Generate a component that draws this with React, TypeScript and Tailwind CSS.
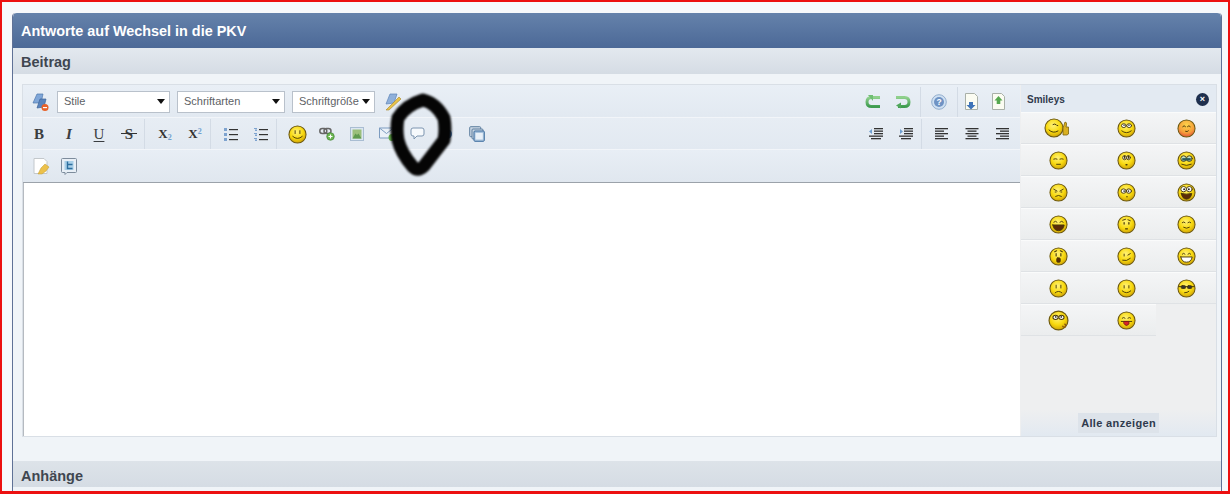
import React, { ReactNode } from 'react';

// Shared gradients for the drawn icons
function Defs() {
  return (
    <svg width="0" height="0" className="absolute">
      <defs>
        <radialGradient id="yellow" cx="45%" cy="35%" r="70%">
          <stop offset="0%" stopColor="#fff27a" />
          <stop offset="55%" stopColor="#f8d90f" />
          <stop offset="100%" stopColor="#c99a06" />
        </radialGradient>
        <radialGradient id="blush" cx="50%" cy="30%" r="75%">
          <stop offset="0%" stopColor="#fbd34a" />
          <stop offset="60%" stopColor="#f6a03a" />
          <stop offset="100%" stopColor="#e0443a" />
        </radialGradient>
        <linearGradient id="green" x1="0" y1="0" x2="0" y2="1">
          <stop offset="0%" stopColor="#8fd08c" />
          <stop offset="100%" stopColor="#3f9c50" />
        </linearGradient>
      </defs>
    </svg>
  );
}

function Face({ children, fill = 'yellow', size = 19 }: { children?: ReactNode; fill?: string; size?: number }) {
  return (
    <svg width={size} height={size} viewBox="0 0 20 20">
      <circle cx="10" cy="10" r="9" fill={`url(#${fill})`} stroke="#6e5a10" strokeWidth="1.1" />
      <g fill="none" stroke="#4a3a08" strokeWidth="1" strokeLinecap="round">{children}</g>
    </svg>
  );
}

const bigEyes = (
  <>
    <ellipse cx="7.2" cy="7" rx="2.5" ry="2" fill="#fff" />
    <ellipse cx="12.8" cy="7" rx="2.5" ry="2" fill="#fff" />
    <circle cx="7.4" cy="6.6" r=".8" fill="#333" stroke="none" />
    <circle cx="12.6" cy="6.6" r=".8" fill="#333" stroke="none" />
  </>
);

const smileys: ReactNode[] = [
  <div key="thumb" className="flex items-center -ml-1">
    <Face size={20}>
      <path d="M9 6.5q1.500-1 3 0M13 7.500l.8.1M5 12q4 4 9 1" />
    </Face>
    <svg width="9" height="15" viewBox="0 0 9 15" className="-ml-1">
      <path d="M3 14V7l2-6q2 0 1.500 3L6 6h2.500v7L7 14z" fill="#d9b020" stroke="#7d6510" strokeWidth=".8" />
    </svg>
  </div>,
  <Face key="roll">
    {bigEyes}
    <path d="M5 12.500q5 4 10 0" />
  </Face>,
  <Face key="blush" fill="blush">
    <path d="M6 8q1.500-2 3 0M11 8q1.500-2 3 0M9 13q2 1 3-.5" />
  </Face>,
  <Face key="sleepy">
    <path d="M5 8.500q2-.8 3.500 0M11.500 8.500q2-.8 3.500 0M8 14h4" />
  </Face>,
  <Face key="up">
    <ellipse cx="8" cy="7" rx="2" ry="2.200" fill="#fff" />
    <ellipse cx="12" cy="7" rx="2" ry="2.200" fill="#fff" />
    <path d="M8 5.500v2M12 5.500v2M9.500 14.500h1" strokeWidth="1.400" />
  </Face>,
  <Face key="glass">
    <ellipse cx="7" cy="8" rx="3" ry="3" fill="#bfe2c8" />
    <ellipse cx="13" cy="8" rx="3" ry="3" fill="#bfe2c8" />
    <rect x="5.500" y="7.500" width="9" height="2.500" fill="#2c5a5a" stroke="none" />
    <path d="M5 14q5 2.500 10 0" />
  </Face>,
  <Face key="angry">
    <path d="M5 6.500l3.500 2M15 6.500l-3.500 2M6.500 9.500h1M12.500 9.500h1M7 14q3-2 6 0" />
  </Face>,
  <Face key="eyes">
    <ellipse cx="7" cy="8.500" rx="2.700" ry="2.300" fill="#fff" />
    <ellipse cx="12.500" cy="8.500" rx="2.700" ry="2.300" fill="#fff" />
    <circle cx="7.500" cy="8.500" r=".9" fill="#333" stroke="none" />
    <circle cx="12" cy="8.500" r=".9" fill="#333" stroke="none" />
    <path d="M10 14.500h1" />
  </Face>,
  <Face key="shock">
    <ellipse cx="7" cy="6.500" rx="3" ry="2.800" fill="#fff" />
    <ellipse cx="13" cy="6.500" rx="3" ry="2.800" fill="#fff" />
    <circle cx="7.500" cy="6.500" r="1" fill="#222" stroke="none" />
    <circle cx="12.500" cy="6.500" r="1" fill="#222" stroke="none" />
    <path d="M4.500 11q5.500 1.500 11 0q-1 6-5.500 6t-5.500-6z" fill="#5b2b08" />
  </Face>,
  <Face key="laugh">
    <path d="M5 7.500q2-2 3.500 0M11.500 7.500q2-2 3.500 0" />
    <path d="M4 10.500h12q-1 6-6 6t-6-6z" fill="#5b2b08" />
  </Face>,
  <Face key="brow">
    <path d="M6 5.500l3-1M11.500 5l2.500 1" />
    <path d="M7.500 8v1.500M12.500 8v1.500M9 14.500h2" strokeWidth="1.300" />
  </Face>,
  <Face key="closed">
    <path d="M5.500 8q1.500-1.500 3 0M11.500 8q1.500-1.500 3 0M7 13q3 2 6 0" />
  </Face>,
  <Face key="oh">
    <path d="M6 5l2-1M12 4l2 1M7.500 7v2.500M12.500 7v2.500" strokeWidth="1.200" />
    <rect x="8.200" y="11.500" width="3.600" height="4.500" rx="1" fill="#5b2b08" />
  </Face>,
  <Face key="wink">
    <path d="M7.500 7.500v2M11.500 8.500l2.500-1.500M6 14q4 1.500 8-2" />
  </Face>,
  <Face key="grin">
    <path d="M5.500 7.500q1.500-2 3 0M11.500 7.500q1.500-2 3 0" />
    <path d="M4 10.500h12q-1 5.500-6 5.500t-6-5.500z" fill="#fff" />
  </Face>,
  <Face key="sad">
    <path d="M7.500 6.500v3M12.500 6.500v3M6.500 14.500q3.500-3 7 0" />
  </Face>,
  <Face key="smile">
    <path d="M7.500 7v2.500M12.500 7v2.500M5.500 12.500q4.500 4 9 0" />
  </Face>,
  <Face key="shades">
    <path d="M2 8h16" />
    <rect x="4.500" y="7" width="4.500" height="3" rx="1" fill="#333" />
    <rect x="11" y="7" width="4.500" height="3" rx="1" fill="#333" />
    <path d="M8 14.500q3 0 4.500-1.500" />
  </Face>,
  <Face key="kiss" size={21}>
    {bigEyes}
    <path d="M14 15.500a1.500 1.500 0 1 0 2-2" strokeWidth="1.300" stroke="#8a5a10" />
  </Face>,
  <Face key="tongue">
    <path d="M5.500 7.500q1.500-1.500 3 0M11.500 7.500q1.500-1.500 3 0M4.500 11h11" />
    <path d="M7.500 11h5v2.500q-2.500 3.500-5 0z" fill="#d8232a" stroke="#7c1616" />
  </Face>,
];

function Btn({ children, w = 'w-[30px]' }: { children: ReactNode; w?: string }) {
  return <div className={`${w} h-5 flex items-center justify-center shrink-0`}>{children}</div>;
}

function Group({ children, last }: { children: ReactNode; last?: boolean }) {
  return (
    <div className={`flex items-center h-[30px] ${last ? '' : 'border-r border-[#d3dbe5] mr-[5px]'}`}>{children}</div>
  );
}

function FakeSelect({ label, width }: { label: string; width: string }) {
  return (
    <div className={`${width} h-[22px] bg-white border border-[#b9c1cb] flex items-center justify-between pl-[6px] pr-[4px] text-[11px] text-[#5d6165]`}>
      <span>{label}</span>
      <svg width="8" height="5" viewBox="0 0 8 5" className="shrink-0"><path d="M0 0h8L4 5z" fill="#111" /></svg>
    </div>
  );
}

function Lines({ align }: { align: 'left' | 'center' | 'right' }) {
  const rows = [13, 9, 13, 9, 13];
  return (
    <svg width="14" height="12" viewBox="0 0 14 12">
      {rows.map((w, i) => {
        const x = align === 'left' ? 0 : align === 'right' ? 14 - w : (14 - w) / 2;
        return <rect key={i} x={x} y={i * 2.5} width={w} height="1.300" fill="#333" />;
      })}
    </svg>
  );
}

function Indent({ out }: { out?: boolean }) {
  return (
    <svg width="14" height="12" viewBox="0 0 14 12">
      <path d={out ? 'M0 3.500L3 1v5z' : 'M4 3.500L1 1v5z'} fill="#6f9fd0" />
      {[0, 2.5, 5].map((y) => <rect key={y} x="5" y={y} width="9" height="1.300" fill="#333" />)}
      <rect x="0" y="7.500" width="14" height="1.300" fill="#333" />
      <rect x="2" y="10" width="10" height="1.300" fill="#333" />
    </svg>
  );
}

function Page({ children }: { children?: ReactNode }) {
  return (
    <svg width="17" height="18" viewBox="0 0 17 18">
      <path d="M2.500.5h9l3 3v13h-12z" fill="#fbfcf2" stroke="#a9b0a8" />
      {children}
    </svg>
  );
}

function App() {
  return (
    <div className="relative w-[1230px] h-[494px] overflow-hidden bg-[#f6f8fb] border-[#ec1010] border-t-2 border-l-2 border-r-2 border-b-[3px] pt-[11px] pl-[10px] pr-[6px] font-['Liberation_Sans',Arial,sans-serif]">
      <Defs />
      <div className="h-[480px] border-x border-[#5f7196] rounded-t-[4px] bg-[#f0f4f8] flex flex-col overflow-hidden">
        <div className="h-[35px] shrink-0 flex items-center pl-2 pt-[2px] rounded-t-[4px] bg-gradient-to-b from-[#6582ab] to-[#4c6997] text-white text-[14.4px] font-bold">
          Antworte auf Wechsel in die PKV
        </div>
        <div className="h-[26px] shrink-0 flex items-center pl-2 pt-[4px] bg-gradient-to-b from-[#e3e9ef] to-[#d5dce4] text-[#3f4650] text-[14.5px] font-bold">
          Beitrag
        </div>
        <div className="h-[387px] shrink-0 pt-[10px] pl-[9px] pr-[4px]">
          <div className="h-[353px] border border-[#d9dfe6] flex">
            {/* editor */}
            <div className="w-[997px] shrink-0 flex flex-col">
              <div className="h-[33px] shrink-0 flex items-center justify-between pt-px bg-gradient-to-b from-[#e9eff6] to-[#e2e9f1] border-b border-[#f2f5f9] pr-[8px]">
                <div className="flex items-center gap-[7px] pl-[4px]">
                  <div className="-mr-[3px]">
                    <Btn w="w-[26px]">
                      <svg width="20" height="20" viewBox="0 0 20 20">
                        <path d="M3 11L7 2h6l-2 9z" fill="#7fa6d8" stroke="#4f78ad" strokeWidth=".7" />
                        <path d="M7 16l3-9h6l-2 8z" fill="#5a84bd" stroke="#3f6699" strokeWidth=".7" />
                        <circle cx="15" cy="15.500" r="3.500" fill="#e8622a" />
                        <rect x="13" y="15" width="4" height="1.200" fill="#fff" />
                      </svg>
                    </Btn>
                  </div>
                  <FakeSelect label="Stile" width="w-[113px]" />
                  <FakeSelect label="Schriftarten" width="w-[108px]" />
                  <FakeSelect label="Schriftgröße" width="w-[83px]" />
                  <Btn w="w-[22px]">
                    <svg width="20" height="20" viewBox="0 0 20 20">
                      <path d="M3 12L7 2h7l-3 9z" fill="#8fb0da" stroke="#5d84b8" strokeWidth=".7" />
                      <path d="M3 18L16 5l2 2L6 18z" fill="#e6c24a" stroke="#a8862a" strokeWidth=".6" />
                    </svg>
                  </Btn>
                </div>
                <div className="flex items-center">
                  <div className="flex items-center h-[30px] border-r border-[#d3dbe5] pr-[2px]">
                    <Btn>
                      <svg width="16" height="14" viewBox="0 0 16 14">
                        <path d="M15 2.500H6.500Q2 2.500 2 7t4.500 4.500H15" fill="none" stroke="url(#green)" strokeWidth="3" />
                        <path d="M3 0l5 0v6z" fill="#6fbe72" />
                      </svg>
                    </Btn>
                    <Btn>
                      <svg width="16" height="14" viewBox="0 0 16 14">
                        <path d="M1 2.500h8.500Q14 2.500 14 7t-4.500 4.500H3" fill="none" stroke="url(#green)" strokeWidth="3" />
                        <path d="M6 7.500v6l-5-3z" fill="#4fa75a" />
                      </svg>
                    </Btn>
                  </div>
                  <div className="flex items-center h-[30px] border-r border-[#d3dbe5] px-[3px]">
                    <Btn>
                      <svg width="16" height="16" viewBox="0 0 16 16">
                        <circle cx="8" cy="8" r="7.300" fill="#cfe0f2" stroke="#93aecd" />
                        <circle cx="8" cy="8" r="5" fill="#6f93c4" />
                        <text x="8" y="11" textAnchor="middle" fontSize="8.500" fontWeight="bold" fill="#fff" fontFamily="Liberation Sans">?</text>
                      </svg>
                    </Btn>
                  </div>
                  <Btn w="w-[27px]">
                    <Page><path d="M6 9h4v3h2.500L8 16.500 3.500 12H6z" fill="#3f74b8" /></Page>
                  </Btn>
                  <Btn w="w-[27px]">
                    <Page><path d="M8.500 3l4 4.500h-2.200V11H6.700V7.500H4.500z" fill="#56a84f" /></Page>
                  </Btn>
                </div>
              </div>
              <div className="h-[32px] shrink-0 flex items-center justify-between pt-px bg-gradient-to-b from-[#e7edf4] to-[#e2e9f1] border-b border-[#f2f5f9] pl-px pr-[3px]">
                <div className="flex items-center">
                  <Group>
                    <Btn><span className="font-['Liberation_Serif'] font-bold text-[15px] text-[#3a3d40]">B</span></Btn>
                    <Btn><span className="font-['Liberation_Serif'] font-bold italic text-[15px] text-[#3a3d40]">I</span></Btn>
                    <Btn><span className="font-['Liberation_Serif'] underline underline-offset-2 text-[15px] text-[#3a3d40]">U</span></Btn>
                    <Btn>
                      <span className="relative font-['Liberation_Serif'] text-[15px] font-bold text-[#3a3d40]">
                        S
                        <span className="absolute -left-[4px] -right-[4px] top-[10px] h-px bg-[#333]" />
                      </span>
                    </Btn>
                  </Group>
                  <Group>
                    <Btn><span className="font-['Liberation_Serif'] font-bold text-[13px] text-[#333]">X<sub className="text-[8px] text-[#6f9fd0]">2</sub></span></Btn>
                    <Btn><span className="font-['Liberation_Serif'] font-bold text-[13px] text-[#333]">X<sup className="text-[8px] text-[#6f9fd0]">2</sup></span></Btn>
                  </Group>
                  <Group>
                    <Btn>
                      <svg width="14" height="13" viewBox="0 0 14 13">
                        {[0, 5, 10].map((y) => (
                          <g key={y}>
                            <rect x="0" y={y} width="3" height="3" fill="#7ea3cf" />
                            <rect x="5" y={y + 1} width="9" height="1.200" fill="#333" />
                          </g>
                        ))}
                      </svg>
                    </Btn>
                    <Btn>
                      <svg width="14" height="13" viewBox="0 0 14 13">
                        {[0, 5, 10].map((y) => (
                          <g key={y}>
                            <rect x="0" y={y} width="3" height="1" fill="#7ea3cf" />
                            <rect x="1" y={y + 1.500} width="2" height="1.500" fill="#7ea3cf" />
                            <rect x="5" y={y + 1} width="9" height="1.200" fill="#333" />
                          </g>
                        ))}
                      </svg>
                    </Btn>
                  </Group>
                  <Group last>
                    <Btn>
                      <Face size={19}>
                        <path d="M7.500 6v3M12.500 6v3M5 12q5 4.500 10 0" />
                      </Face>
                    </Btn>
                    <Btn>
                      <svg width="16" height="14" viewBox="0 0 16 14">
                        <rect x=".8" y="1.500" width="7" height="5" rx="2.500" fill="none" stroke="#666" strokeWidth="1.500" />
                        <rect x="5" y="1.500" width="7" height="5" rx="2.500" fill="none" stroke="#666" strokeWidth="1.500" />
                        <circle cx="11.500" cy="9.500" r="3.800" fill="#69b54f" stroke="#3f7f32" strokeWidth=".6" />
                        <path d="M9.500 9.500h4M11.500 7.500v4" stroke="#fff" strokeWidth="1.200" />
                      </svg>
                    </Btn>
                    <Btn>
                      <svg width="14" height="14" viewBox="0 0 14 14">
                        <rect x=".5" y=".5" width="13" height="13" fill="#dbe6f1" stroke="#a9bdd2" />
                        <rect x="2.500" y="2.500" width="9" height="9" fill="#9bbf7c" />
                        <path d="M2.500 11.500l3-5 1.500 1.500 1.500-1.500 3 5z" fill="#5f9a50" />
                      </svg>
                    </Btn>
                    <Btn>
                      <svg width="17" height="14" viewBox="0 0 17 14">
                        <path d="M.5 1h14v10H.5z" fill="#eaf1f8" stroke="#7d9cc0" />
                        <path d="M.5 1l7 5.500 7-5.500" fill="none" stroke="#7d9cc0" />
                        <circle cx="13" cy="10.500" r="3.500" fill="#69b54f" />
                      </svg>
                    </Btn>
                    <Btn>
                      <svg width="15" height="14" viewBox="0 0 15 14">
                        <path d="M3 1h9q2 0 2 2v4q0 2-2 2H7l-3 3V9H3Q1 9 1 7V3q0-2 2-2z" fill="#f6f9fc" stroke="#7d95b0" />
                      </svg>
                    </Btn>
                    <Btn>
                      <svg width="14" height="14" viewBox="0 0 14 14">
                        <circle cx="7" cy="7" r="5" fill="#4a78b0" />
                      </svg>
                    </Btn>
                    <Btn>
                      <svg width="16" height="16" viewBox="0 0 16 16">
                        <rect x=".7" y=".7" width="11" height="10" rx="1" fill="#c9d6e3" stroke="#5e7f9f" />
                        <rect x="3" y="3" width="11" height="10" rx="1" fill="#c9d6e3" stroke="#5e7f9f" />
                        <rect x="5" y="5" width="10.300" height="10.300" rx="1" fill="#a9c3dd" stroke="#3f6f9f" />
                        <rect x="6.500" y="7" width="7.300" height="6.500" fill="#e8f0f8" />
                      </svg>
                    </Btn>
                  </Group>
                </div>
                <div className="flex items-center">
                  <div className="flex items-center h-[30px] border-r border-[#d3dbe5] mr-[5px]">
                    <Btn><Indent out /></Btn>
                    <Btn><Indent /></Btn>
                  </div>
                  <Btn><Lines align="left" /></Btn>
                  <Btn><Lines align="center" /></Btn>
                  <Btn><Lines align="right" /></Btn>
                </div>
              </div>
              <div className="h-[33px] shrink-0 flex items-center bg-gradient-to-b from-[#e8eef5] to-[#e0e7ef] border-b border-[#9ba2aa] pl-[3px]">
                <Btn>
                  <svg width="17" height="17" viewBox="0 0 17 17">
                    <path d="M1 .5h10l3 3v12H1z" fill="#fff" stroke="#c3c8cc" />
                    <path d="M5 16l3-6 4-4 4 3-3 4-4 3z" fill="#ecc14b" stroke="#c29a2c" strokeWidth=".5" />
                  </svg>
                </Btn>
                <div className="-ml-[2px]">
                  <Btn>
                    <svg width="16" height="17" viewBox="0 0 16 17">
                      <path d="M1.500.5h13a1 1 0 0 1 1 1v12a1 1 0 0 1-1 1H6l-2 2v-2H1.500a1 1 0 0 1-1-1v-12a1 1 0 0 1 1-1z" fill="#e8eff6" stroke="#7d8c9c" />
                      <rect x="3.500" y="3" width="9" height="9" fill="#a8cfe8" />
                      <path d="M6.500 3.500v7h5M6.500 6.500h5" stroke="#2d6f9f" strokeWidth="1.400" fill="none" />
                    </svg>
                  </Btn>
                </div>
              </div>
              <div className="flex-1 bg-white border-l border-[#b5bac0]" />
            </div>
            {/* smileys */}
            <div className="flex-1 flex flex-col pl-px bg-[#eeeff0]">
              <div className="h-[27px] shrink-0 flex items-center justify-between pt-px pl-[6px] pr-[7px] bg-[#e3eaf2] text-[10px] font-bold text-[#2f3a4d]">
                <span>Smileys</span>
                <span className="w-[13px] h-[13px] rounded-full bg-[#1e2f4d] text-white flex items-center justify-center text-[9px] leading-none">×</span>
              </div>
              <div className="grid grid-cols-[75px_60px_60px]">
                {smileys.map((s, i) => (
                  <div
                    key={i}
                    className="h-[32px] flex items-center justify-center bg-gradient-to-b from-[#f4f5f6] to-[#ebedee] border-b border-[#dfe2e5] border-t border-t-[#fafbfb]"
                  >
                    {s}
                  </div>
                ))}
              </div>
              <div className="flex-1" />
              <div className="h-[26px] shrink-0 flex justify-end items-center pr-[57px] bg-gradient-to-b from-[#eeeff0] to-[#e2e9f1]">
                <span className="h-5 px-[3px] flex items-center bg-[#dde3ea] text-[11px] font-bold tracking-[0.35px] text-[#2f3a4d]">Alle anzeigen</span>
              </div>
            </div>
          </div>
        </div>
        <div className="h-[26px] shrink-0 flex items-center pl-2 pt-[5px] bg-gradient-to-b from-[#dde3e9] to-[#d5dce4] text-[#3f4650] text-[14.5px] font-bold">
          Anhänge
        </div>
      </div>
      {/* hand-drawn marker ring on top of the screenshot */}
      <svg className="absolute left-[378px] top-[83px] blur-[1px]" width="90" height="100" viewBox="0 0 90 100">
        <path d="M43 15Q56 18 64 33Q66 44 64 55L44 81Q38 87 33 82Q21 68 18 55Q16 44 18 33Q26 20 43 15Z" fill="none" stroke="#050505" strokeWidth="13" strokeLinejoin="round" />
      </svg>
    </div>
  );
}

export default App;
